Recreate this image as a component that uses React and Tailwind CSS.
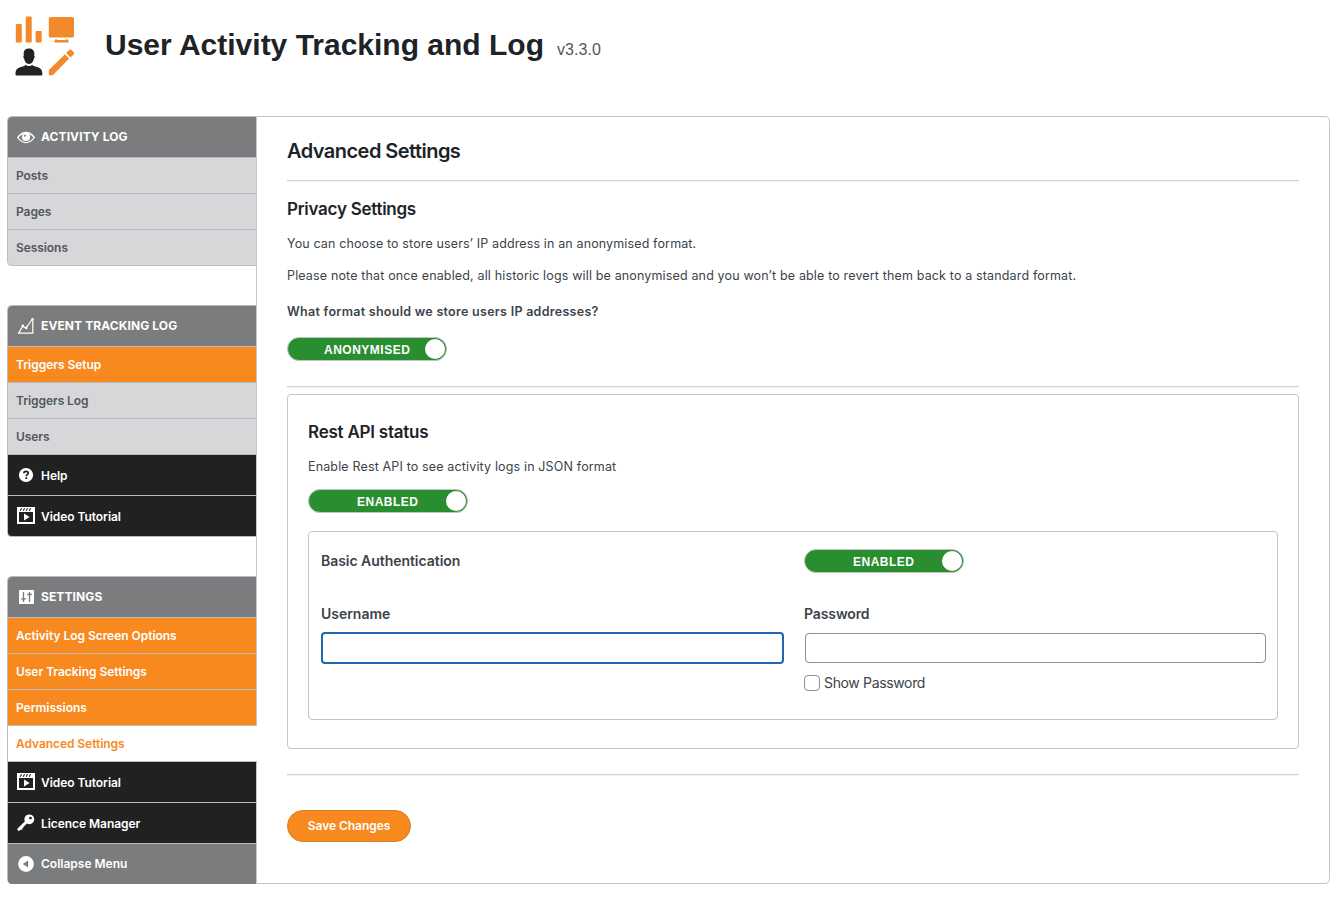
function Logo() {
  return (
    <svg width="64" height="64" viewBox="0 0 64 64" className="shrink-0">
      <g fill="#f28a2c">
        <rect x="2.8" y="11" width="6" height="18.6" rx="1" />
        <rect x="12.7" y="3.6" width="6" height="26" rx="1" />
        <rect x="22.6" y="18" width="6.1" height="11.6" rx="1" />
        <rect x="35.8" y="4" width="25.2" height="20.6" rx="1.6" />
        <path d="M42.500 26.300h1.200c.5.700 1 .8 1.800.8h6c.8 0 1.300-.1 1.800-.8h1.200c.3 1.100 1.300 1.200 1.300 2.300 0 .7-.5 1-1.100 1H42.300c-.6 0-1.100-.3-1.100-1 0-1.100 1-1.200 1.300-2.300z" />
        <path d="M36.200 56.800L51.900 41.300l4.300 4.300L41 60.900c-.7.800-1.600 1.300-2.600 1.300h-1.600c-.6 0-1-.4-1-1v-2.700c0-.7 0-1.200.4-1.700z" />
        <path d="M53.100 40l2.900-2.700c.9-.9 2-.9 2.800-.1l1.700 1.700c.8.800.8 2-.1 2.900L57.500 44.500z" />
      </g>
      <g fill="#222">
        <path d="M16 35.600c3.500 0 5.400 1.900 5.400 5.300l-.2 1.800c.7.400.5 2.200-.3 2.800-.6 2.600-1.500 5.300-4.900 5.500-3.400-.2-4.300-2.900-4.900-5.500-.8-.6-1-2.400-.3-2.800l-.2-1.800c0-3.400 1.900-5.300 5.400-5.300z" />
        <path d="M12.700 51.700c1.800 1.700 4.800 1.700 6.600 0 .3 1 2 1.600 4.900 2.400 3.800 1 5.100 3.200 5.200 6.800 0 1-.5 1.600-1.400 1.600H3.900c-.9 0-1.400-.6-1.400-1.600.1-3.600 1.400-5.800 5.300-6.800 2.900-.8 4.600-1.400 4.900-2.400z" />
      </g>
    </svg>
  );
}

function EyeIcon() {
  return (
    <svg width="18" height="18" viewBox="0 0 18 18">
      <path d="M.7 9.500Q4.300 4.500 9 4.500t8.300 5Q13.700 14.600 9 14.600T.7 9.500z" fill="none" stroke="#fff" strokeWidth="1.300" />
      <circle cx="9" cy="8.900" r="4.100" fill="#fff" />
      <circle cx="7.900" cy="7.800" r="1" fill="#7b7c7d" />
    </svg>
  );
}

function ChartIcon() {
  return (
    <svg width="18" height="18" viewBox="0 0 18 18" fill="none" stroke="#fff">
      <path d="M15.800 2.200V16.200H1.600L5.800 9.200 9 11.200 15 2.500" strokeWidth="1.200" />
      <circle cx="15.500" cy="2.300" r="1.200" fill="#fff" stroke="none" />
      <circle cx="9.200" cy="10.900" r="1.300" fill="#fff" stroke="none" />
      <circle cx="5.800" cy="8.900" r="1.300" fill="#fff" stroke="none" />
    </svg>
  );
}

function HelpIcon() {
  return (
    <svg width="18" height="18" viewBox="0 0 18 18">
      <circle cx="9" cy="9" r="7.100" fill="#fff" />
      <path d="M6.900 7.300C6.900 5.900 7.800 5.300 9 5.300s2.200.7 2.200 1.900c0 1.500-1.900 1.500-1.900 3" fill="none" stroke="#212121" strokeWidth="1.700" />
      <rect x="8.300" y="11.300" width="1.900" height="1.700" fill="#212121" />
    </svg>
  );
}

function VideoIcon() {
  return (
    <svg width="18" height="18" viewBox="0 0 18 18">
      <rect width="18" height="17" fill="#fff" />
      <path d="M2 5h14v10H2z" fill="#212121" />
      <path d="M3.100 3.700l1.500-2.400M6.100 3.700l1.500-2.400M9.100 3.700l1.500-2.400M12.100 3.700l1.500-2.400" stroke="#212121" strokeWidth="1.100" />
      <path d="M7 6.500v7l5.600-3.500z" fill="#fff" />
    </svg>
  );
}

function SlidersIcon() {
  return (
    <svg width="18" height="18" viewBox="0 0 18 18">
      <rect x="2" y="2" width="15" height="14" rx=".6" fill="#fff" />
      <path d="M6.500 4v10M12.500 4v10M4.200 10.800h4.600M10.200 6.500h4.600" stroke="#7b7c7d" strokeWidth="1.300" />
      <path d="M5.300 11.500h2.400L6.500 13zM11.300 6h2.400l-1.200-1.500z" fill="#7b7c7d" />
    </svg>
  );
}

function KeyIcon() {
  return (
    <svg width="18" height="18" viewBox="0 0 18 18">
      <path d="M9.800 7.600L1.900 15.300" stroke="#fff" strokeWidth="3" strokeLinecap="round" />
      <path d="M3 13.800l2.300 1.500M4.500 12.300l1.500 1.400" stroke="#fff" strokeWidth="1.600" />
      <circle cx="12.300" cy="5.300" r="4.900" fill="#fff" />
      <circle cx="13.500" cy="4.100" r="1.400" fill="#212121" />
    </svg>
  );
}

function CollapseIcon() {
  return (
    <svg width="18" height="18" viewBox="0 0 18 18">
      <circle cx="9" cy="9" r="7.900" fill="#fff" />
      <path d="M11.100 5.500v7L5.800 9z" fill="#7b7c7d" />
    </svg>
  );
}

const lineBase = "flex items-center border-b border-[#bbbcbf] text-[12px]";

function Header({ icon, children }) {
  return (
    <div className={`${lineBase} h-[41px] gap-[6px] bg-[#7b7c7d] pl-[9px] font-bold tracking-[0.1px] text-white`}>
      {icon}
      <span>{children}</span>
    </div>
  );
}

function DarkItem({ icon, children }) {
  return (
    <div className={`${lineBase} h-[41px] gap-[6px] bg-[#212121] pl-[9px] font-semibold tracking-[-0.05px] text-white`}>
      {icon}
      <span className="pt-[2px]">{children}</span>
    </div>
  );
}

const itemTones = {
  gray: "bg-[#d7d7d9] text-[#50575e] font-semibold tracking-[-0.07px]",
  orange: "bg-[#f7891f] text-white font-semibold tracking-[-0.03px]",
  active: "relative -mr-px bg-white text-[#f7891f] font-semibold tracking-[-0.06px]",
};

function Item({ tone = "gray", children }) {
  return <div className={`${lineBase} h-9 pl-2 ${itemTones[tone]}`}>{children}</div>;
}

function Toggle({ pad = "pl-[48px]", children }) {
  return (
    <div className="flex h-6 w-40 items-center justify-between rounded-full border border-[#c3c4c7] bg-[#298e30] pr-px">
      <span className={`${pad} pt-px font-['Liberation_Sans',Arial,sans-serif] text-[12px] font-bold tracking-[0.5px] text-white`}>
        {children}
      </span>
      <span className="h-5 w-5 rounded-full bg-white" />
    </div>
  );
}

function Rule({ className }) {
  return <div className={`h-[2px] border-t border-[#d5d5d7] bg-[#f3f3f4] ${className}`} />;
}

export default function App() {
  return (
    <div className="h-[897px] w-[1342px] overflow-hidden bg-white font-['Inter',sans-serif] text-[#3c434a]">
      <header className="flex h-[116px] items-start pt-[13px] pl-[13px]">
        <Logo />
        <h1 className="ml-[28px] mt-[12px] font-['Liberation_Sans',Arial,sans-serif] text-[30px] leading-[40px] font-bold whitespace-nowrap text-[#1d2327]">
          User Activity Tracking and Log
        </h1>
        <span className="ml-[13px] mt-[27px] font-['Liberation_Sans',Arial,sans-serif] text-[16px] leading-[20px] tracking-[0.07px] text-[#50575e]">
          v3.3.0
        </span>
      </header>

      <div className="flex pl-[7px]">
        <nav className="flex w-[249px] flex-col gap-[39px]">
          <section className="rounded-l-[5px] border-t border-l border-[#bbbcbf] *:first:rounded-tl *:last:rounded-bl">
            <Header icon={<EyeIcon />}>ACTIVITY LOG</Header>
            <Item>Posts</Item>
            <Item>Pages</Item>
            <Item>Sessions</Item>
          </section>

          <section className="rounded-l-[5px] border-t border-l border-[#bbbcbf] *:first:rounded-tl *:last:rounded-bl">
            <Header icon={<ChartIcon />}>EVENT TRACKING LOG</Header>
            <Item tone="orange">Triggers Setup</Item>
            <Item>Triggers Log</Item>
            <Item>Users</Item>
            <DarkItem icon={<HelpIcon />}>Help</DarkItem>
            <DarkItem icon={<VideoIcon />}>Video Tutorial</DarkItem>
          </section>

          <section className="rounded-l-[5px] border-t border-l border-[#bbbcbf] *:first:rounded-tl *:last:rounded-bl">
            <Header icon={<SlidersIcon />}>SETTINGS</Header>
            <Item tone="orange">Activity Log Screen Options</Item>
            <Item tone="orange">User Tracking Settings</Item>
            <Item tone="orange">Permissions</Item>
            <Item tone="active">Advanced Settings</Item>
            <DarkItem icon={<VideoIcon />}>Video Tutorial</DarkItem>
            <DarkItem icon={<KeyIcon />}>Licence Manager</DarkItem>
            <div className="flex h-10 items-center gap-[6px] bg-[#7b7c7d] pl-[9px] text-[12px] font-semibold text-white">
              <CollapseIcon />
              <span>Collapse Menu</span>
            </div>
          </section>
        </nav>

        <main className="h-[768px] w-[1074px] rounded-r-[5px] border border-[#c3c4c7] px-[30px] pt-5">
          <h2 className="text-[20px] leading-7 font-semibold tracking-[-0.54px] text-[#1d2327]">Advanced Settings</h2>
          <Rule className="mt-[15px]" />

          <h3 className="mt-[15px] text-[17px] leading-6 font-semibold tracking-[-0.27px] text-[#1d2327]">Privacy Settings</h3>
          <p className="mt-[13px] text-[12.5px] leading-5 tracking-[0.13px]">
            You can choose to store users’ IP address in an anonymised format.
          </p>
          <p className="mt-3 text-[12.5px] leading-5 tracking-[0.15px]">
            Please note that once enabled, all historic logs will be anonymised and you won’t be able to revert them back to a standard format.
          </p>
          <p className="mt-4 mb-[15px] text-[12.5px] leading-5 font-semibold tracking-[0.28px]">
            What format should we store users IP addresses?
          </p>
          <Toggle pad="pl-[36px]">ANONYMISED</Toggle>
          <Rule className="mt-[25px]" />

          <section className="mt-[6px] h-[355px] rounded-[4px] border border-[#c3c4c7] px-5 pt-[25px]">
            <h3 className="text-[17px] leading-6 font-semibold tracking-[-0.23px] text-[#1d2327]">Rest API status</h3>
            <p className="mt-[13px] mb-3 text-[12.5px] leading-5 tracking-[0.15px]">
              Enable Rest API to see activity logs in JSON format
            </p>
            <Toggle>ENABLED</Toggle>

            <div className="mt-[18px] grid h-[189px] grid-cols-[463px_462px] content-start gap-x-5 rounded-[4px] border border-[#c3c4c7] px-3 pt-[17px] text-[14px]">
              <div className="h-[55px] leading-6 font-semibold tracking-[-0.04px]">Basic Authentication</div>
              <div className="h-[55px]">
                <Toggle>ENABLED</Toggle>
              </div>
              <div className="flex flex-col">
                <label className="mb-[8px] leading-5 font-semibold tracking-[-0.03px]">Username</label>
                <input type="text" className="h-8 w-[463px] rounded-[4px] border-2 border-[#2069ac] bg-white px-2 outline-none" />
              </div>
              <div className="flex flex-col">
                <label className="mb-[9px] leading-5 font-semibold tracking-[-0.11px]">Password</label>
                <input type="password" className="ml-px h-[30px] w-[461px] rounded-[4px] border border-[#8c8f94] bg-white px-2 outline-none" />
                <label className="mt-[10px] flex items-center gap-1 leading-5 tracking-[-0.35px]">
                  <input type="checkbox" className="h-4 w-4 appearance-none rounded-[4px] border border-[#8c8f94] bg-white" />
                  <span>Show Password</span>
                </label>
              </div>
            </div>
          </section>

          <Rule className="mt-[25px]" />
          <button className="mt-[34px] flex h-8 w-[124px] items-center justify-center rounded-full border border-[#d08122] bg-[#f7891f] text-[12px] font-semibold tracking-[-0.05px] text-white">
            Save Changes
          </button>
        </main>
      </div>
    </div>
  );
}
